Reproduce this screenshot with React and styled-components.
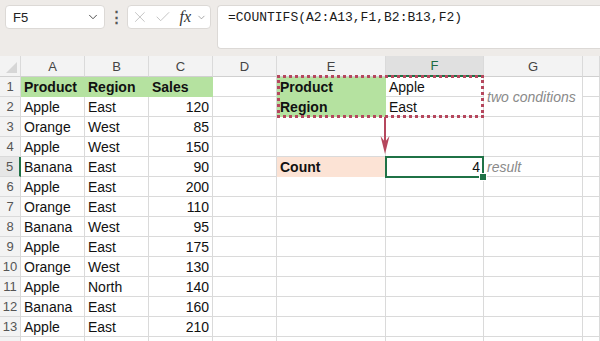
import React from "react";
import styled, { createGlobalStyle } from "styled-components";
import { ChevronDown, X, Check } from "lucide-react";

const GlobalStyle = createGlobalStyle`
  body {
    margin: 0;
    overflow: hidden;
    background: #fff;
    font-family: "Liberation Sans", Arial, sans-serif;
  }
`;

const Page = styled.div`
  width: 600px;
  height: 341px;
  overflow: hidden;
  display: flex;
  flex-direction: column;
`;

const Toolbar = styled.div`
  height: 56px;
  flex: none;
  display: flex;
  align-items: flex-start;
  padding: 5px 0 0 5px;
  box-sizing: border-box;
  background: #eeebe8;
`;

const NameBox = styled.div`
  width: 100px;
  height: 24px;
  box-sizing: border-box;
  display: flex;
  align-items: center;
  justify-content: space-between;
  padding: 0 4px 0 7px;
  background: #fff;
  border: 1px solid #dcd9d6;
  border-radius: 4px;
  font-size: 13px;
  color: #222;
`;

const Dots = styled.div`
  width: 22px;
  height: 24px;
  display: flex;
  align-items: center;
  justify-content: center;
  font-size: 15px;
  font-weight: bold;
  color: #555;
`;

const ButtonGroup = styled.div`
  width: 84px;
  height: 24px;
  box-sizing: border-box;
  display: flex;
  align-items: center;
  gap: 5px;
  padding: 0 3px 0 3px;
  background: #fff;
  border: 1px solid #dcd9d6;
  border-radius: 4px;
  color: #b8b8b8;
`;

const Fx = styled.span`
  font-family: "Liberation Serif", "Times New Roman", serif;
  font-style: italic;
  font-size: 16px;
  color: #333;
  margin-left: 3px;
`;

const FormulaBox = styled.div`
  flex: 1;
  margin-left: 6px;
  height: 44px;
  box-sizing: border-box;
  padding: 4px 10px;
  background: #fff;
  border: 1px solid #dcd9d6;
  border-right: none;
  border-radius: 4px 0 0 4px;
  font-family: "Liberation Mono", "DejaVu Sans Mono", monospace;
  font-size: 13px;
  line-height: 16px;
  color: #1a1a1a;
  white-space: nowrap;
`;

const Sheet = styled.div`
  display: grid;
  grid-template-columns: 21px 64px 64px 64px 64px 109px 98px 99px 1fr;
  grid-template-rows: 21px;
  grid-auto-rows: 20px;
  flex: none;
`;

const Corner = styled.div`
  grid-row: 1;
  grid-column: 1;
  position: relative;
  background: #f3f3f3;
  border-right: 1px solid #dadada;
  border-bottom: 1px solid #d0d0d0;
  &::after {
    content: "";
    position: absolute;
    right: 3px;
    bottom: 3px;
    width: 11px;
    height: 11px;
    background: #d6d6d6;
    clip-path: polygon(100% 0, 100% 100%, 0 100%);
  }
`;

const ColHead = styled.div`
  grid-row: 1;
  grid-column: ${(p) => p.$col};
  display: flex;
  align-items: center;
  justify-content: center;
  box-sizing: border-box;
  font-size: 13px;
  color: ${(p) => (p.$active ? "#1d6b42" : "#444")};
  background: ${(p) => (p.$active ? "#e0e0e0" : "#f3f3f3")};
  border-right: 1px solid #dadada;
  border-bottom: ${(p) => (p.$active ? "2px solid #1f7246" : "1px solid #d0d0d0")};
`;

const RowHead = styled.div`
  grid-row: ${(p) => p.$row};
  grid-column: 1;
  display: flex;
  align-items: center;
  justify-content: center;
  box-sizing: border-box;
  font-size: 13px;
  color: #555;
  background: ${(p) => (p.$active ? "#e6e6e6" : "#f3f3f3")};
  border-bottom: 1px solid #dadada;
  border-right: ${(p) => (p.$active ? "2px solid #1f7246" : "1px solid #dadada")};
`;

const Cell = styled.div`
  grid-row: ${(p) => p.$row};
  grid-column: ${(p) => p.$col};
  display: flex;
  align-items: center;
  justify-content: ${(p) => (p.$num ? "flex-end" : "flex-start")};
  box-sizing: border-box;
  padding: 0 3px;
  font-size: 14px;
  font-weight: ${(p) => (p.$bold ? "bold" : "normal")};
  font-style: ${(p) => (p.$note ? "italic" : "normal")};
  color: ${(p) => (p.$note ? "#8a8a8a" : "#111")};
  white-space: nowrap;
  background: ${(p) => p.$fill || "#fff"};
  border-right: 1px solid ${(p) => p.$fill || "#dadada"};
  border-bottom: 1px solid ${(p) => p.$fill || "#dadada"};
`;

const CriteriaFrame = styled.div`
  grid-row: 2 / 4;
  grid-column: 6 / 8;
  margin: -2px 0 -1px 0;
  border: 3px dotted #b5475d;
  pointer-events: none;
  z-index: 2;
`;

const Selection = styled.div`
  grid-row: 6;
  grid-column: 7;
  position: relative;
  margin: -1px 0 -1px -1px;
  border: 2px solid #1f7246;
  pointer-events: none;
  z-index: 3;
  &::after {
    content: "";
    position: absolute;
    right: -5px;
    bottom: -5px;
    width: 6px;
    height: 6px;
    background: #1f7246;
    border: 1px solid #fff;
  }
`;

const ArrowSlot = styled.div`
  grid-row: 4 / 6;
  grid-column: 6;
  justify-self: end;
  width: 10px;
  margin-right: -4px;
  z-index: 2;
`;

const colLetters = ["A", "B", "C", "D", "E", "F", "G", ""];

const data = [
  ["Product", "Region", "Sales"],
  ["Apple", "East", 120],
  ["Orange", "West", 85],
  ["Apple", "West", 150],
  ["Banana", "East", 90],
  ["Apple", "East", 200],
  ["Orange", "East", 110],
  ["Banana", "West", 95],
  ["Apple", "East", 175],
  ["Orange", "West", 130],
  ["Apple", "North", 140],
  ["Banana", "East", 160],
  ["Apple", "East", 210],
];

const GREEN = "#b5e2a0";
const PEACH = "#fce3d5";

function sideCell(r, c) {
  // E..H on the right side of the sheet
  if (c === 6 && r === 1) return { text: "Product", bold: true, fill: GREEN };
  if (c === 6 && r === 2) return { text: "Region", bold: true, fill: GREEN };
  if (c === 7 && r === 1) return { text: "Apple" };
  if (c === 7 && r === 2) return { text: "East" };
  if (c === 6 && r === 5) return { text: "Count", bold: true, fill: PEACH };
  if (c === 7 && r === 5) return { text: "4", num: true };
  if (c === 8 && r === 5) return { text: "result", note: true };
  return { text: "" };
}

export default function App() {
  const rows = Array.from({ length: 14 }, (_, i) => i + 1);
  const cells = [];

  rows.forEach((r) => {
    const gr = r + 1;
    cells.push(
      <RowHead key={`rh${r}`} $row={gr} $active={r === 5}>
        {r <= 13 ? r : ""}
      </RowHead>
    );
    for (let c = 2; c <= 9; c++) {
      if (c === 8 && r === 2) continue;
      if (c === 8 && r === 1) {
        cells.push(
          <Cell key="g1" $row="2 / 4" $col={8} $note>
            two conditions
          </Cell>
        );
        continue;
      }
      let info = { text: "" };
      if (c <= 4 && data[r - 1]) {
        const v = data[r - 1][c - 2];
        info = {
          text: v,
          num: typeof v === "number",
          bold: r === 1,
          fill: r === 1 ? GREEN : undefined,
        };
      } else if (c >= 6) {
        info = sideCell(r, c);
      }
      cells.push(
        <Cell
          key={`c${r}-${c}`}
          $row={gr}
          $col={c}
          $num={info.num}
          $bold={info.bold}
          $note={info.note}
          $fill={info.fill}
        >
          {info.text}
        </Cell>
      );
    }
  });

  return (
    <Page>
      <GlobalStyle />
      <Toolbar>
        <NameBox>
          <span>F5</span>
          <ChevronDown size={14} color="#444" strokeWidth={1.6} />
        </NameBox>
        <Dots>⋮</Dots>
        <ButtonGroup>
          <X size={18} strokeWidth={1.1} />
          <Check size={18} strokeWidth={1.1} />
          <Fx>fx</Fx>
          <ChevronDown size={11} color="#888" strokeWidth={1.6} />
        </ButtonGroup>
        <FormulaBox>=COUNTIFS(A2:A13,F1,B2:B13,F2)</FormulaBox>
      </Toolbar>
      <Sheet>
        <Corner />
        {colLetters.map((l, i) => (
          <ColHead key={`h${i}`} $col={i + 2} $active={l === "F"}>
            {l}
          </ColHead>
        ))}
        {cells}
        <CriteriaFrame />
        <ArrowSlot>
          <svg width="10" height="40" viewBox="0 0 10 40">
            <line x1="5" y1="0" x2="5" y2="30" stroke="#b5475d" strokeWidth="2" />
            <path d="M0.5 19 L5 37 L9.5 19 L5 25 Z" fill="#b5475d" />
          </svg>
        </ArrowSlot>
        <Selection />
      </Sheet>
    </Page>
  );
}
